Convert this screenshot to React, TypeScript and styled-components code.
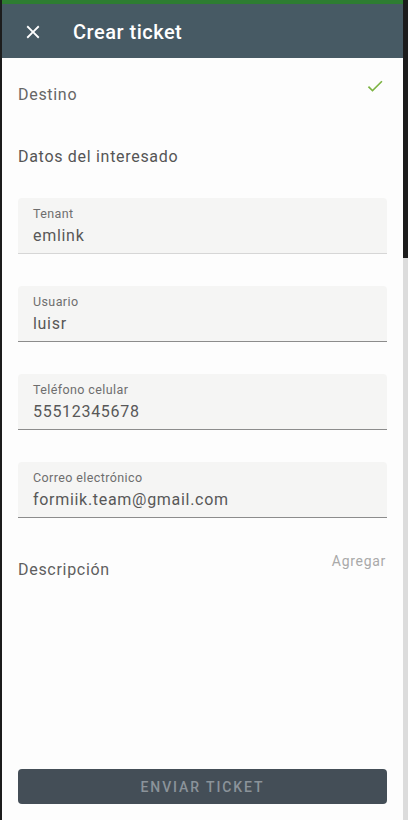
import React from "react";
import styled, { createGlobalStyle } from "styled-components";

const Global = createGlobalStyle`
  html, body { margin: 0; padding: 0; background: #1c1c1c; }
  body { font-family: Roboto, "Noto Sans", Arial, sans-serif; -webkit-font-smoothing: antialiased; }
  * { box-sizing: border-box; }
`;

const Page = styled.div`
  display: flex;
  width: 408px;
  height: 820px;
  overflow: hidden;
`;

const LeftEdge = styled.div`
  width: 2px;
  background: #1c1c1c;
`;

const RightEdge = styled.div`
  width: 5px;
  display: flex;
  flex-direction: column;
`;

const EdgeSegment = styled.div<{ $h?: number; $c: string }>`
  background: ${(p) => p.$c};
  ${(p) => (p.$h ? `height: ${p.$h}px;` : "flex: 1;")}
`;

const Dialog = styled.div`
  width: 401px;
  height: 820px;
  background: #fdfdfd;
  display: flex;
  flex-direction: column;
`;

const TopStripe = styled.div`
  height: 4px;
  background: #2e7d32;
`;

const Header = styled.header`
  height: 54px;
  background: #475a64;
  display: flex;
  align-items: center;
  padding-left: 20px;
  padding-top: 1px;
  gap: 29px;
  color: #fff;
`;

const IconBtn = styled.span`
  display: flex;
  width: 22px;
  height: 22px;
`;

const Title = styled.h1`
  margin: 0;
  font-size: 20px;
  font-weight: 500;
  letter-spacing: 0.5px;
  line-height: 24px;
`;

const Body = styled.div`
  flex: 1;
  display: flex;
  flex-direction: column;
  padding: 25px 16px 16px;
`;

const SectionRow = styled.div<{ $mt?: number }>`
  display: flex;
  justify-content: space-between;
  align-items: flex-start;
  margin-top: ${(p) => p.$mt ?? 0}px;
`;

const SectionTitle = styled.div<{ $c?: string }>`
  font-size: 16px;
  line-height: 24px;
  letter-spacing: 0.7px;
  color: ${(p) => p.$c ?? "#5f5f5f"};
`;

const CheckIcon = styled.span`
  display: flex;
  width: 20px;
  height: 20px;
  margin-top: -7px;
  margin-right: 2px;
`;

const AddLink = styled.span`
  font-size: 14px;
  line-height: 20px;
  letter-spacing: 0.7px;
  color: #a9a9a9;
  margin-top: -7px;
  margin-right: 1px;
`;

const Fields = styled.div`
  display: flex;
  flex-direction: column;
  gap: 32px;
  margin-top: 29px;
`;

const Field = styled.div<{ $line: string }>`
  height: 56px;
  background: #f5f5f4;
  border-radius: 4px 4px 0 0;
  border-bottom: 1px solid ${(p) => p.$line};
  padding: 8px 15px 0;
  display: flex;
  flex-direction: column;
  gap: 4px;
`;

const Label = styled.label`
  font-size: 12.5px;
  line-height: 16px;
  letter-spacing: 0.4px;
  color: #6e6e6e;
`;

const Value = styled.div`
  font-size: 16px;
  line-height: 20px;
  color: #585858;
  letter-spacing: 0.7px;
`;

const Submit = styled.button`
  margin-top: auto;
  height: 35px;
  border: none;
  border-radius: 4px;
  background: #444e57;
  color: #8b939a;
  font-family: Roboto, Arial, sans-serif;
  font-size: 14px;
  font-weight: 500;
  letter-spacing: 1.9px;
  text-transform: uppercase;
`;

const fields = [
  { label: "Tenant", value: "emlink", line: "#d6d6d6" },
  { label: "Usuario", value: "luisr", line: "#8c8c8c" },
  { label: "Teléfono celular", value: "55512345678", line: "#8c8c8c" },
  { label: "Correo electrónico", value: "formiik.team@gmail.com", line: "#8c8c8c" },
];

export default function App() {
  return (
    <>
      <Global />
      <Page>
        <LeftEdge />
        <Dialog>
          <TopStripe />
          <Header>
            <IconBtn>
              <svg viewBox="0 0 24 24" width="22" height="22" fill="#fff">
                <path d="M19 6.41L17.59 5 12 10.59 6.41 5 5 6.41 10.59 12 5 17.59 6.41 19 12 13.41 17.59 19 19 17.59 13.41 12z" />
              </svg>
            </IconBtn>
            <Title>Crear ticket</Title>
          </Header>
          <Body>
            <SectionRow>
              <SectionTitle $c="#666">Destino</SectionTitle>
              <CheckIcon>
                <svg viewBox="0 0 24 24" width="20" height="20" fill="#7cb342">
                  <path d="M9 16.17L4.83 12l-1.42 1.41L9 19 21 7l-1.41-1.41z" />
                </svg>
              </CheckIcon>
            </SectionRow>
            <SectionRow $mt={38}>
              <SectionTitle $c="#555">Datos del interesado</SectionTitle>
            </SectionRow>
            <Fields>
              {fields.map((f) => (
                <Field key={f.label} $line={f.line}>
                  <Label>{f.label}</Label>
                  <Value>{f.value}</Value>
                </Field>
              ))}
            </Fields>
            <SectionRow $mt={40}>
              <SectionTitle $c="#5f5f5f">Descripción</SectionTitle>
              <AddLink>Agregar</AddLink>
            </SectionRow>
            <Submit type="button">Enviar ticket</Submit>
          </Body>
        </Dialog>
        <RightEdge>
          <EdgeSegment $h={258} $c="#1c1c1c" />
          <EdgeSegment $c="#dcdcdc" />
        </RightEdge>
      </Page>
    </>
  );
}
